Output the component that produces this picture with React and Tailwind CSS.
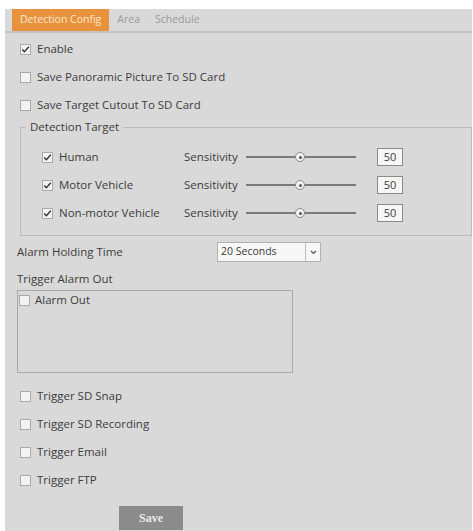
import React from 'react';

const font = { fontFamily: '"Open Sans", "Liberation Sans", sans-serif' };

function Box({ checked }) {
  return (
    <span className="inline-flex items-center justify-center w-[11px] h-[11px] border border-[#a9a9a9] bg-[#f3f3f3] shrink-0">
      {checked && (
        <svg width="9" height="9" viewBox="0 0 9 9">
          <path d="M1.2 4.6 L3.4 6.8 L7.8 1.8" fill="none" stroke="#333" strokeWidth="1.4" />
        </svg>
      )}
    </span>
  );
}

function CheckRow({ label, checked, className = '' }) {
  return (
    <div className={`flex items-center h-[28px] gap-[6px] ${className}`}>
      <Box checked={checked} />
      <span>{label}</span>
    </div>
  );
}

function Slider() {
  return (
    <div className="relative w-[110px] h-[12px] flex items-center">
      <div className="w-full h-[2px] bg-[#7a7a7a]" />
      <span className="absolute left-[49px] top-[1px] w-[10px] h-[10px] rounded-full border border-[#888] bg-[#f2f2f2] flex items-center justify-center">
        <span className="w-[3px] h-[3px] rounded-full bg-[#555]" />
      </span>
    </div>
  );
}

const targets = ['Human', 'Motor Vehicle', 'Non-motor Vehicle'];
const triggers = ['Trigger SD Snap', 'Trigger SD Recording', 'Trigger Email', 'Trigger FTP'];

export default function App() {
  return (
    <div className="w-[473px] h-[531px] bg-white pt-[9px] pl-[5px] pr-[1px] overflow-hidden" style={font}>
      <div className="h-full bg-[#d9d9d9] text-[11.5px] text-[#3c3c3c]">
        {/* tabs */}
        <div className="flex items-end h-[24px] pl-[7px] border-b-2 border-[#c4c4c4] text-[10.5px]">
          <div className="h-[22px] px-[8px] flex items-center bg-[#e9923d] text-[#fbe7cf]">Detection Config</div>
          <div className="h-[22px] px-[8px] flex items-center text-[#9a9a9a]">Area</div>
          <div className="h-[22px] px-[7px] flex items-center text-[#9a9a9a]">Schedule</div>
        </div>

        <div className="pl-[15px] pt-[2px]">
          <CheckRow label="Enable" checked />
          <CheckRow label="Save Panoramic Picture To SD Card" />
          <CheckRow label="Save Target Cutout To SD Card" />
        </div>

        <fieldset className="ml-[15px] border border-[#bcbcbc] pb-[8px]">
          <legend className="ml-[5px] px-[4px] h-[16px] leading-[16px]">Detection Target</legend>
          <div className="pl-[21px] pt-[8px]">
            {targets.map((t) => (
              <div key={t} className="flex items-center h-[28px]">
                <div className="w-[142px] flex items-center gap-[6px]">
                  <Box checked />
                  <span>{t}</span>
                </div>
                <span className="w-[62px]">Sensitivity</span>
                <Slider />
                <span className="ml-[21px] w-[26px] h-[18px] border border-[#8a8a8a] bg-[#f7f7f7] flex items-center justify-center text-[11px]">50</span>
              </div>
            ))}
          </div>
        </fieldset>

        <div className="flex items-center h-[32px] pl-[12px]">
          <span className="w-[200px]">Alarm Holding Time</span>
          <div className="flex h-[20px] w-[104px] border border-[#b0b0b0] bg-[#f7f7f7]">
            <span className="flex-1 pl-[3px] flex items-center text-[10.5px]">20 Seconds</span>
            <span className="w-[15px] border-l border-[#c0c0c0] flex items-center justify-center">
              <svg width="7" height="5" viewBox="0 0 7 5"><path d="M1 1 L3.5 3.5 L6 1" fill="none" stroke="#555" strokeWidth="1.2" /></svg>
            </span>
          </div>
        </div>

        <div className="pl-[12px]">
          <div className="h-[22px] flex items-center">Trigger Alarm Out</div>
          <div className="w-[276px] h-[83px] border border-[#a8a8a8] pl-[1px]">
            <div className="flex items-center h-[18px] gap-[5px]">
              <Box />
              <span>Alarm Out</span>
            </div>
          </div>
        </div>

        <div className="pl-[15px] pt-[9px]">
          {triggers.map((t) => (
            <CheckRow key={t} label={t} />
          ))}
        </div>

        <div className="pl-[114px] pt-[12px]">
          <div className="w-[64px] h-[24px] bg-[#8b8b8b] flex items-center justify-center text-[12px] font-bold text-[#ececec]" style={{ fontFamily: '"Liberation Serif", serif' }}>Save</div>
        </div>
      </div>
    </div>
  );
}
